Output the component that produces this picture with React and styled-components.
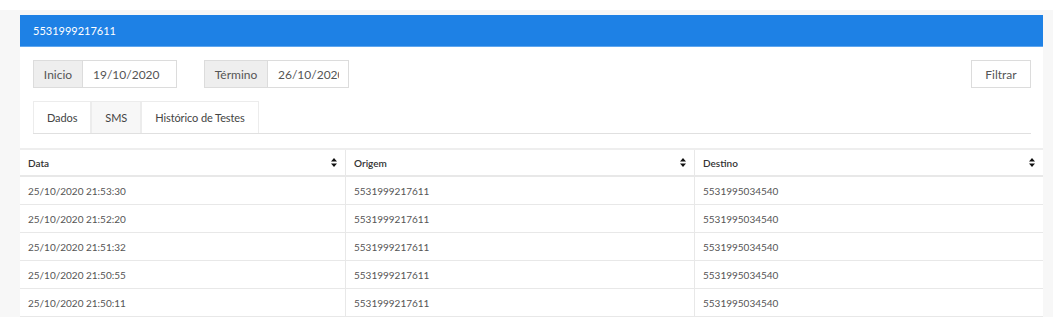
import React from 'react';
import styled, { createGlobalStyle } from 'styled-components';

const GlobalStyle = createGlobalStyle`
  body {
    margin: 0;
    background: #ffffff;
    font-family: Lato, "Open Sans", sans-serif;
  }
`;

const rows = [
  '25/10/2020 21:53:30',
  '25/10/2020 21:52:20',
  '25/10/2020 21:51:32',
  '25/10/2020 21:50:55',
  '25/10/2020 21:50:11',
];

const SortIcon = () => (
  <svg width="6" height="9" viewBox="0 0 6 9">
    <path d="M3 0 L6 3.6 L0 3.6 Z M0 5.4 L6 5.4 L3 9 Z" fill="#111" />
  </svg>
);

const App = () => {
  return (
    <>
      <GlobalStyle />
      <Page>
        <Panel>
          <PanelHeader>5531999217611</PanelHeader>
          <PanelBody>
            <FilterRow>
              <Groups>
                <InputGroup>
                  <Addon width={49}>Inicio</Addon>
                  <Field width={93} readOnly value="19/10/2020" />
                </InputGroup>
                <InputGroup>
                  <Addon width={63}>Término</Addon>
                  <Field width={80} readOnly value="26/10/2020" />
                </InputGroup>
              </Groups>
              <Button>Filtrar</Button>
            </FilterRow>
            <Tabs>
              <Tab>Dados</Tab>
              <Tab active>SMS</Tab>
              <Tab>Histórico de Testes</Tab>
            </Tabs>
          </PanelBody>
          <Table>
            <HeadCell>
              Data <SortIcon />
            </HeadCell>
            <HeadCell>
              Origem <SortIcon />
            </HeadCell>
            <HeadCell last>
              Destino <SortIcon />
            </HeadCell>
            {rows.map((date) => (
              <React.Fragment key={date}>
                <Cell>{date}</Cell>
                <Cell>5531999217611</Cell>
                <Cell last>5531995034540</Cell>
              </React.Fragment>
            ))}
          </Table>
        </Panel>
      </Page>
    </>
  );
};

const Page = styled.div`
  margin-top: 10px;
  width: 1053px;
  height: 307px;
  box-sizing: border-box;
  padding: 5px 10px 0 20px;
  background: #f7f7f7;
  overflow: hidden;
`;

const Panel = styled.section`
  background: #fff;
  height: 302px;
  overflow: hidden;
`;

const PanelHeader = styled.div`
  height: 32px;
  box-sizing: border-box;
  padding-left: 13px;
  display: flex;
  align-items: center;
  background: #1e81e5;
  border-bottom: 1px solid #5fa6ee;
  color: #fff;
  font-size: 11px;
`;

const PanelBody = styled.div`
  padding: 13px 12px 14px 13px;
`;

const FilterRow = styled.div`
  display: flex;
  justify-content: space-between;
  align-items: center;
`;

const Groups = styled.div`
  display: flex;
  gap: 27px;
`;

const InputGroup = styled.div`
  display: flex;
  height: 28px;
  box-sizing: border-box;
  border: 1px solid #dcdcdc;
  font-size: 12px;
`;

const Addon = styled.div`
  width: ${(p) => p.width}px;
  box-sizing: border-box;
  display: flex;
  align-items: center;
  justify-content: center;
  background: #eeeeee;
  border-right: 1px solid #dcdcdc;
  color: #555;
`;

const Field = styled.input`
  width: ${(p) => p.width}px;
  box-sizing: border-box;
  margin: 0;
  padding: 0 9px 0 10px;
  border: none;
  outline: none;
  background: #fff;
  font-family: Lato, "Open Sans", sans-serif;
  font-size: 12px;
  color: #555;
`;

const Button = styled.div`
  width: 60px;
  height: 28px;
  box-sizing: border-box;
  border: 1px solid #dcdcdc;
  display: flex;
  align-items: center;
  justify-content: center;
  font-size: 12px;
  color: #555;
`;

const Tabs = styled.div`
  margin-top: 13px;
  display: flex;
  border-bottom: 1px solid #e0e0e0;
`;

const Tab = styled.div`
  height: 32px;
  box-sizing: border-box;
  padding: 0 13px;
  display: flex;
  align-items: center;
  border: 1px solid #ececec;
  border-bottom: none;
  background: ${(p) => (p.active ? '#f7f7f7' : '#fff')};
  font-size: 11px;
  letter-spacing: -0.1px;
  color: #444;
`;

const Table = styled.div`
  display: grid;
  grid-template-columns: 326px 349px 1fr;
  border-top: 2px solid #eeeeee;
  font-size: 10px;
`;

const HeadCell = styled.div`
  height: 27px;
  box-sizing: border-box;
  display: flex;
  align-items: center;
  justify-content: space-between;
  padding: 0 8px 0 8px;
  border-right: ${(p) => (p.last ? 'none' : '1px solid #e8e8e8')};
  border-bottom: 2px solid #e8e8e8;
  font-weight: 600;
  color: #333;
`;

const Cell = styled.div`
  height: 28px;
  box-sizing: border-box;
  display: flex;
  align-items: center;
  padding-left: 8px;
  border-right: ${(p) => (p.last ? 'none' : '1px solid #e8e8e8')};
  border-bottom: 1px solid #e8e8e8;
  color: #555;
`;

export default App;
